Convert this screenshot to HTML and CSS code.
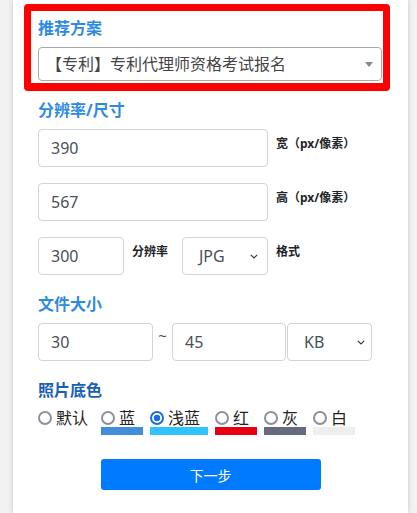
FILE: index.html
```html
<!DOCTYPE html>
<html lang="zh-CN">
<head>
    <meta charset="UTF-8">
    <meta name="viewport" content="width=device-width, initial-scale=1.0">
    <title>证件照规格</title>
    <link rel="stylesheet" href="styles.css">
</head>
<body>
    <div class="card">
        <section class="plan">
            <h3 class="title">推荐方案</h3>
            <div class="combo">
                <span>【专利】专利代理师资格考试报名</span>
                <i class="caret"></i>
            </div>
        </section>

        <section class="group">
            <h3 class="title">分辨率/尺寸</h3>
            <div class="row">
                <input type="text" class="field w-wide" value="390">
                <label class="lbl">宽（px/像素）</label>
            </div>
            <div class="row">
                <input type="text" class="field w-wide" value="567">
                <label class="lbl">高（px/像素）</label>
            </div>
            <div class="row">
                <input type="text" class="field w-small" value="300">
                <label class="lbl w-lbl">分辨率</label>
                <div class="picker w-small">
                    <span>JPG</span>
                    <svg class="chev" width="8" height="5" viewBox="0 0 8 5"><path d="M0.8 0.8 L4 4 L7.2 0.8" fill="none" stroke="#343a40" stroke-width="1.2"/></svg>
                </div>
                <label class="lbl">格式</label>
            </div>
        </section>

        <section class="group gap-top">
            <h3 class="title">文件大小</h3>
            <div class="row size-row">
                <input type="text" class="field w-min" value="30">
                <span class="tilde">~</span>
                <input type="text" class="field w-max" value="45">
                <div class="picker w-unit">
                    <span>KB</span>
                    <svg class="chev" width="8" height="5" viewBox="0 0 8 5"><path d="M0.8 0.8 L4 4 L7.2 0.8" fill="none" stroke="#343a40" stroke-width="1.2"/></svg>
                </div>
            </div>
        </section>

        <section class="group gap-top">
            <h3 class="title dark">照片底色</h3>
            <div class="colors">
                <label class="opt opt-first">
                    <span class="line"><input type="radio" name="bg" class="radio">默认</span>
                </label>
                <label class="opt">
                    <span class="line"><input type="radio" name="bg" class="radio">蓝</span>
                    <span class="bar bar-blue"></span>
                </label>
                <label class="opt">
                    <span class="line"><input type="radio" name="bg" class="radio" checked>浅蓝</span>
                    <span class="bar bar-sky"></span>
                </label>
                <label class="opt">
                    <span class="line"><input type="radio" name="bg" class="radio">红</span>
                    <span class="bar bar-red"></span>
                </label>
                <label class="opt">
                    <span class="line"><input type="radio" name="bg" class="radio">灰</span>
                    <span class="bar bar-gray"></span>
                </label>
                <label class="opt">
                    <span class="line"><input type="radio" name="bg" class="radio">白</span>
                    <span class="bar bar-white"></span>
                </label>
            </div>
        </section>

        <div class="actions">
            <button class="btn-next">下一步</button>
        </div>
    </div>
</body>
</html>
```

FILE: styles.css
```css
body {
    margin: 0;
    padding: 0;
    background: #f2f2f2;
    font-family: "Noto Sans", "Noto Sans CJK SC", sans-serif;
    color: #212529;
}
.card {
    box-sizing: border-box;
    width: 395px;
    min-height: 100vh;
    margin-left: 13px;
    padding: 4px 0 16px 11px;
    background: #fff;
    box-shadow: 0 0 5px rgba(0, 0, 0, 0.18);
}
.title {
    margin: 0 0 7px;
    font-size: 16px;
    line-height: 24px;
    font-weight: 700;
    color: #2d8ae3;
}
.title.dark { color: #1760b3; }

/* red highlighted block */
.plan {
    box-sizing: border-box;
    width: 366px;
    border: 7px solid #ff0000;
    border-bottom-width: 8px;
    border-radius: 4px;
    padding: 5px 1px 2px 7px;
}
.combo {
    box-sizing: border-box;
    height: 34px;
    display: flex;
    align-items: center;
    padding: 0 8px 0 7px;
    border: 1px solid #aaa;
    border-radius: 4px;
    font-size: 16px;
    color: #444;
    line-height: 20px;
}
.combo span { flex: 1; }
.caret {
    width: 0;
    height: 0;
    border-left: 4px solid transparent;
    border-right: 4px solid transparent;
    border-top: 5px solid #888;
}

.group { padding: 0 8px 0 14px; }
.plan + .group { margin-top: 7px; }
.gap-top { margin-top: 17px; }

.row {
    display: flex;
    align-items: flex-start;
    gap: 8px;
    margin-bottom: 16px;
}
.row:last-child { margin-bottom: 0; }
.field {
    box-sizing: border-box;
    height: 38px;
    margin: 0;
    padding: 0 12px;
    border: 1px solid #ced4da;
    border-radius: 4px;
    font-family: "Noto Sans", sans-serif;
    font-size: 16px;
    color: #495057;
    background: #fff;
}
.w-wide { width: 230px; }
.w-small { width: 86px; }
.w-lbl { width: 42px; }
.w-min { width: 115px; }
.w-max { width: 114px; }
.w-unit { width: 85px; }
.lbl {
    padding-top: 6px;
    font-size: 12px;
    line-height: 18px;
    font-weight: 700;
    color: #212529;
    white-space: nowrap;
}
.picker {
    box-sizing: border-box;
    height: 38px;
    display: flex;
    align-items: center;
    padding: 0 9px 0 16px;
    border: 1px solid #ced4da;
    border-radius: 4px;
    font-size: 16px;
    color: #495057;
}
.picker span { flex: 1; }
.size-row { gap: 0; }
.size-row .picker { margin-left: 1px; padding-right: 6px; }
.tilde {
    width: 19px;
    text-align: center;
    padding-top: 3px;
    font-size: 15px;
    line-height: 18px;
    color: #495057;
}

/* background colour options */
.colors {
    display: flex;
    align-items: flex-start;
    gap: 7px;
    margin-top: 6px;
}
.opt {
    display: flex;
    flex-direction: column;
}
.opt-first { margin-right: -2px; }
.line {
    display: flex;
    align-items: center;
    padding-right: 8px;
    font-size: 16px;
    line-height: 18px;
    color: #222;
}
.radio {
    appearance: none;
    box-sizing: border-box;
    width: 14px;
    height: 14px;
    margin: 0 4px 0 0;
    border: 2px solid #8f8f9d;
    border-radius: 50%;
    background: #fff;
}
.radio:checked {
    border-color: #1a6ee0;
    background: radial-gradient(circle, #1a6ee0 0 3px, #fff 3.6px);
}
.bar { height: 8px; }
.bar-blue { background: #438edb; }
.bar-sky { background: #2fc4ff; }
.bar-red { background: #e60012; }
.bar-gray { background: #666b80; }
.bar-white { background: #eeeeee; }

.actions {
    display: flex;
    justify-content: center;
    margin: 24px 0 0 -11px;
}
.btn-next {
    width: 220px;
    height: 31px;
    border: none;
    border-radius: 3px;
    background: #007bff;
    color: #fff;
    font-family: "Noto Sans CJK SC", sans-serif;
    font-size: 14px;
}
```
